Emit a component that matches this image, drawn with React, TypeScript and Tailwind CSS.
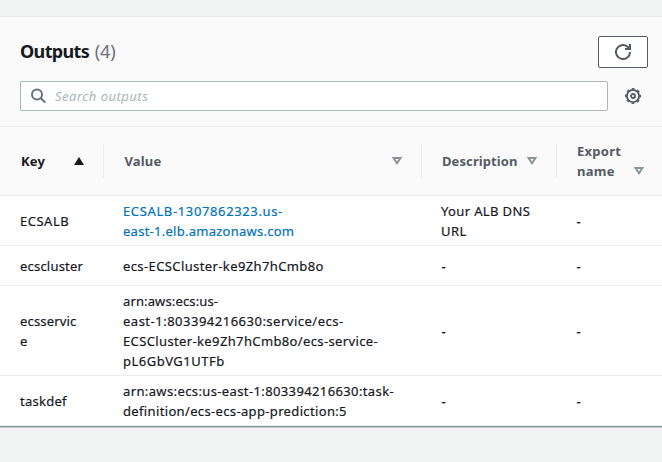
import React from 'react';

type Line = { text: string; spacing: string };
type Row = { key: Line[]; value: Line[]; description: Line[]; height: string; link?: boolean };

const dash: Line[] = [{ text: '-', spacing: 'pl-[0.5px] font-medium' }];

const rows: Row[] = [
  {
    key: [{ text: 'ECSALB', spacing: 'tracking-[0.5px]' }],
    value: [
      { text: 'ECSALB-1307862323.us-', spacing: 'tracking-[0.63px]' },
      { text: 'east-1.elb.amazonaws.com', spacing: 'tracking-[0.26px]' },
    ],
    description: [
      { text: 'Your ALB DNS', spacing: 'tracking-[0.36px]' },
      { text: 'URL', spacing: 'tracking-[0.4px]' },
    ],
    height: 'h-[50px]',
    link: true,
  },
  {
    key: [{ text: 'ecscluster', spacing: 'tracking-[0.2px]' }],
    value: [{ text: 'ecs-ECSCluster-ke9Zh7hCmb8o', spacing: 'tracking-[0.39px]' }],
    description: dash,
    height: 'h-[40px]',
  },
  {
    key: [
      { text: 'ecsservic', spacing: 'tracking-[0.18px]' },
      { text: 'e', spacing: 'tracking-normal' },
    ],
    value: [
      { text: 'arn:aws:ecs:us-', spacing: 'tracking-[0.13px]' },
      { text: 'east-1:803394216630:service/ecs-', spacing: 'tracking-[0.5px]' },
      { text: 'ECSCluster-ke9Zh7hCmb8o/ecs-service-', spacing: 'tracking-[0.37px]' },
      { text: 'pL6GbVG1UTFb', spacing: 'tracking-[0.5px]' },
    ],
    description: dash,
    height: 'h-[90px]',
  },
  {
    key: [{ text: 'taskdef', spacing: 'tracking-[0.25px]' }],
    value: [
      { text: 'arn:aws:ecs:us-east-1:803394216630:task-', spacing: 'tracking-[0.38px]' },
      { text: 'definition/ecs-ecs-app-prediction:5', spacing: 'tracking-[0.35px]' },
    ],
    description: dash,
    height: 'h-[50px]',
  },
];

const columns = 'grid grid-cols-[103px_318px_135px_106px]';

function Lines({ lines }: { lines: Line[] }) {
  return (
    <div className="pl-5 whitespace-nowrap [-webkit-text-stroke:0.2px_currentColor]">
      {lines.map((line) => (
        <div key={line.text} className={line.spacing}>{line.text}</div>
      ))}
    </div>
  );
}

function SortIcon() {
  return (
    <svg width="10" height="8" viewBox="0 0 10 8" fill="none" stroke="#879596" strokeWidth="2">
      <path d="M1.5 1h7L5 6.2z" />
    </svg>
  );
}

export default function App() {
  return (
    <div className="h-[462px] w-[662px] overflow-hidden bg-[#f2f3f3] pt-4 font-['Noto_Sans',sans-serif] text-[13px] leading-5 text-[#16191f]">
      <section>
        <header className="h-[111px] border-y border-[#eaeded] bg-[#fafafa] pt-[19px] pl-5">
          <div className="flex h-8 justify-between pr-[14px]">
            <h2 className="flex gap-[5px] text-lg leading-[30px]">
              <span className="font-bold tracking-[-0.65px]">Outputs</span>
              <span className="pl-[0.5px] text-[#687078]">(4)</span>
            </h2>
            <button className="flex h-8 w-[50px] items-center justify-center rounded-xs border border-[#545b64] bg-white">
              <svg width="16" height="16" viewBox="0 0 16 16" fill="none" stroke="#545b64" strokeWidth="2">
                <path d="M15 8A7 7 0 1 1 12.6 2.8L15 5" />
                <path d="M10 5h5V0" />
              </svg>
            </button>
          </div>
          <div className="mt-[13px] flex items-center">
            <div className="flex h-[30px] w-[588px] items-center rounded-xs border border-[#aab7b8] bg-white pl-[10px]">
              <svg width="16" height="16" viewBox="0 0 16 16" fill="none" stroke="#687078" strokeWidth="2">
                <circle cx="6" cy="6.5" r="5" />
                <path d="M9.5 10l4.8 4.5" />
              </svg>
              <span className="ml-2 tracking-[0.5px] text-[#aab7b8] italic">Search outputs</span>
            </div>
            <svg className="ml-[17px]" width="16" height="16" viewBox="0 0 16 16" fill="none" stroke="#545b64">
              <circle cx="8" cy="8" r="6.1" strokeWidth="1.9" />
              <circle cx="8" cy="8" r="7.4" strokeWidth="1.2" strokeDasharray="2.9 2.912" strokeDashoffset="1.45" />
              <circle cx="8" cy="8" r="2" strokeWidth="1.8" />
            </svg>
          </div>
        </header>
        <div className={`${columns} h-[69px] items-center border-b border-[#eaeded] bg-[#fafafa] font-bold text-[#545b64]`}>
          <div className="flex h-[34px] items-center justify-between pr-[19px] pl-[21px] text-[#16191f]">
            <span className="tracking-[0.15px]">Key</span>
            <svg width="10" height="8" viewBox="0 0 10 8" fill="currentColor"><path d="M5 0l5 8H0z" /></svg>
          </div>
          <div className="flex h-[34px] items-center justify-between border-l border-[#eaeded] pr-[19px] pl-[20px]">
            <span className="pl-[0.5px] tracking-[0.15px]">Value</span><SortIcon />
          </div>
          <div className="flex h-[34px] items-center justify-between border-l border-[#eaeded] pr-[19px] pl-[20px]">
            <span className="tracking-[0.1px]">Description</span><SortIcon />
          </div>
          <div className="flex h-[34px] items-center justify-between border-l border-[#eaeded] pr-[18px] pl-[20px]">
            <span className="tracking-[0.25px]">Export<br />name</span>
            <div className="pt-[20px]"><SortIcon /></div>
          </div>
        </div>
        <div className="border-b border-[#879596] bg-white shadow-[0_1px_0_#c6cccd]">
          {rows.map((row) => (
            <div key={row.key[0].text} className={`${columns} ${row.height} items-center border-b border-[#eaeded] pt-px`}>
              <Lines lines={row.key} />
              <div className={row.link ? 'text-[#0073bb]' : ''}><Lines lines={row.value} /></div>
              <Lines lines={row.description} />
              <Lines lines={dash} />
            </div>
          ))}
        </div>
      </section>
    </div>
  );
}
